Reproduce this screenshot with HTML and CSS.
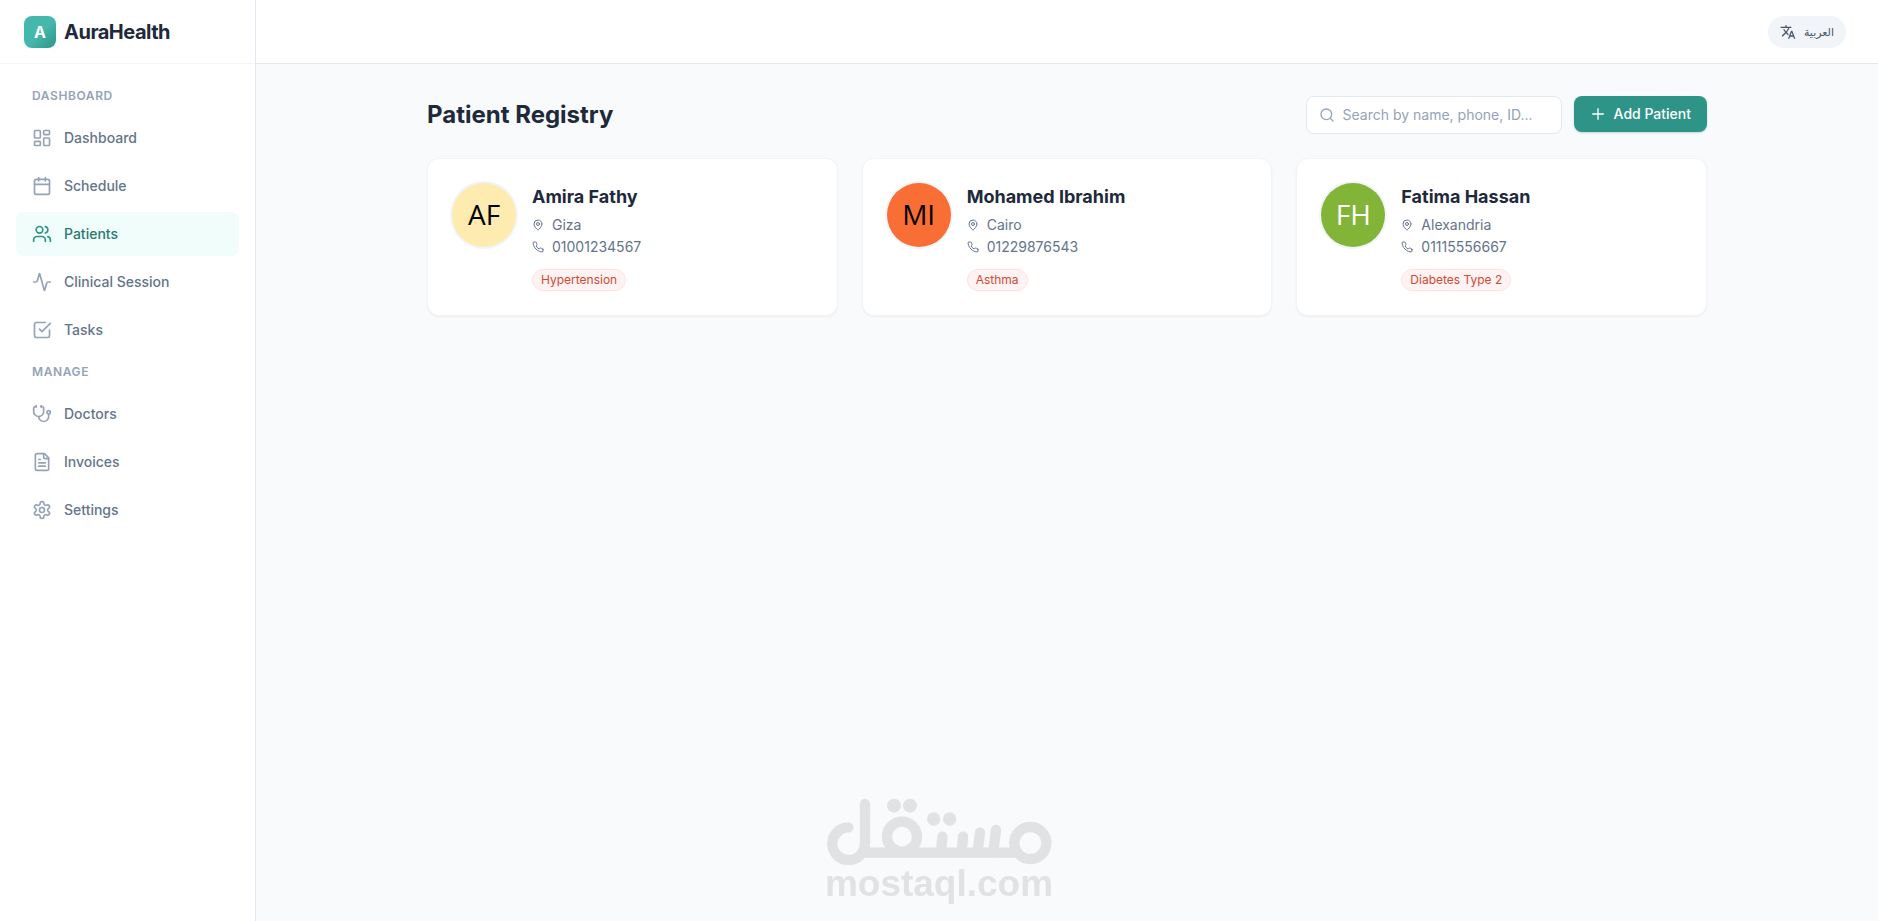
FILE: index.html
```html
<!DOCTYPE html>
<html lang="en">
<head>
  <meta charset="UTF-8" />
  <meta name="viewport" content="width=device-width, initial-scale=1.0" />
  <title>AuraHealth</title>

  <link rel="stylesheet" href="styles.css">
</head>
<body>

  <div class="app">
    <!-- Sidebar -->
    <aside class="sidebar">
      <a class="brand" href="#">
        <span class="brand-mark">A</span>
        <span class="brand-name">AuraHealth</span>
      </a>

      <nav class="nav">
        <h3>Dashboard</h3>
        <ul>
          <li><a href="#">
            <svg class="icon" viewBox="0 0 24 24"><rect x="3" y="3" width="7" height="9" rx="1"/><rect x="14" y="3" width="7" height="5" rx="1"/><rect x="14" y="12" width="7" height="9" rx="1"/><rect x="3" y="16" width="7" height="5" rx="1"/></svg>
            Dashboard
          </a></li>
          <li><a href="#">
            <svg class="icon" viewBox="0 0 24 24"><path d="M8 2v4M16 2v4"/><rect x="3" y="4" width="18" height="18" rx="2"/><path d="M3 10h18"/></svg>
            Schedule
          </a></li>
          <li><a class="active" href="#">
            <svg class="icon" viewBox="0 0 24 24"><path d="M16 21v-2a4 4 0 0 0-4-4H6a4 4 0 0 0-4 4v2"/><circle cx="9" cy="7" r="4"/><path d="M22 21v-2a4 4 0 0 0-3-3.87"/><path d="M16 3.13a4 4 0 0 1 0 7.75"/></svg>
            Patients
          </a></li>
          <li><a href="#">
            <svg class="icon" viewBox="0 0 24 24"><path d="M22 12h-2.48a2 2 0 0 0-1.93 1.46l-2.35 8.36a.25.25 0 0 1-.48 0L9.24 2.18a.25.25 0 0 0-.48 0l-2.35 8.36A2 2 0 0 1 4.49 12H2"/></svg>
            Clinical Session
          </a></li>
          <li><a href="#">
            <svg class="icon" viewBox="0 0 24 24"><path d="m9 11 3 3L22 4"/><path d="M21 12v7a2 2 0 0 1-2 2H5a2 2 0 0 1-2-2V5a2 2 0 0 1 2-2h11"/></svg>
            Tasks
          </a></li>
        </ul>

        <h3>Manage</h3>
        <ul>
          <li><a href="#">
            <svg class="icon" viewBox="0 0 24 24"><path d="M11 2v2M5 2v2"/><path d="M5 3H4a2 2 0 0 0-2 2v4a6 6 0 0 0 12 0V5a2 2 0 0 0-2-2h-1"/><path d="M8 15a6 6 0 0 0 12 0v-3"/><circle cx="20" cy="10" r="2"/></svg>
            Doctors
          </a></li>
          <li><a href="#">
            <svg class="icon" viewBox="0 0 24 24"><path d="M15 2H6a2 2 0 0 0-2 2v16a2 2 0 0 0 2 2h12a2 2 0 0 0 2-2V7Z"/><path d="M14 2v4a2 2 0 0 0 2 2h4"/><path d="M10 9H8M16 13H8M16 17H8"/></svg>
            Invoices
          </a></li>
          <li><a href="#">
            <svg class="icon" viewBox="0 0 24 24"><path d="M12.22 2h-.44a2 2 0 0 0-2 2v.18a2 2 0 0 1-1 1.73l-.43.25a2 2 0 0 1-2 0l-.15-.08a2 2 0 0 0-2.73.73l-.22.38a2 2 0 0 0 .73 2.73l.15.1a2 2 0 0 1 1 1.72v.51a2 2 0 0 1-1 1.74l-.15.09a2 2 0 0 0-.73 2.73l.22.38a2 2 0 0 0 2.73.73l.15-.08a2 2 0 0 1 2 0l.43.25a2 2 0 0 1 1 1.73V20a2 2 0 0 0 2 2h.44a2 2 0 0 0 2-2v-.18a2 2 0 0 1 1-1.73l.43-.25a2 2 0 0 1 2 0l.15.08a2 2 0 0 0 2.73-.73l.22-.39a2 2 0 0 0-.73-2.73l-.15-.08a2 2 0 0 1-1-1.74v-.5a2 2 0 0 1 1-1.74l.15-.09a2 2 0 0 0 .73-2.73l-.22-.38a2 2 0 0 0-2.73-.73l-.15.08a2 2 0 0 1-2 0l-.43-.25a2 2 0 0 1-1-1.73V4a2 2 0 0 0-2-2z"/><circle cx="12" cy="12" r="3"/></svg>
            Settings
          </a></li>
        </ul>
      </nav>
    </aside>

    <div class="page">
      <!-- Top bar -->
      <header class="topbar">
        <button class="lang-button" type="button">
          <svg class="lang-icon" viewBox="0 0 24 24"><path d="M12.87 15.07l-2.54-2.51.03-.03A17.52 17.52 0 0 0 14.07 6H17V4h-7V2H8v2H1v2h11.17C11.5 7.92 10.44 9.75 9 11.35 8.07 10.32 7.3 9.19 6.69 8h-2c.73 1.63 1.73 3.17 2.98 4.56l-5.09 5.02L4 19l5-5 3.11 3.11.76-2.04zM18.5 10h-2L12 22h2l1.12-3h4.75L21 22h2l-4.5-12zm-2.62 7l1.62-4.33L19.12 17h-3.24z"/></svg>
          <span lang="ar">العربية</span>
        </button>
      </header>

      <main class="content">
        <div class="page-header">
          <h1>Patient Registry</h1>
          <div class="actions">
            <label class="search">
              <svg class="icon" viewBox="0 0 24 24"><circle cx="11" cy="11" r="8"/><path d="m21 21-4.300-4.300"/></svg>
              <input type="text" placeholder="Search by name, phone, ID..." aria-label="Search patients" />
            </label>
            <button class="add-button" type="button">
              <svg class="icon" viewBox="0 0 24 24"><path d="M4 12h16M12 4v16"/></svg>
              Add Patient
            </button>
          </div>
        </div>

        <!-- Patient cards -->
        <div class="patient-grid">
          <article class="patient-card">
            <div class="avatar avatar-yellow">AF</div>
            <div class="patient-info">
              <h2>Amira Fathy</h2>
              <p><svg class="icon" viewBox="0 0 24 24"><path d="M20 10c0 5-5.500 10.200-7.400 11.800a1 1 0 0 1-1.200 0C9.500 20.200 4 15 4 10a8 8 0 0 1 16 0"/><circle cx="12" cy="10" r="3"/></svg>Giza</p>
              <p><svg class="icon" viewBox="0 0 24 24"><path d="M22 16.920v3a2 2 0 0 1-2.180 2 19.790 19.790 0 0 1-8.630-3.070 19.500 19.500 0 0 1-6-6 19.790 19.790 0 0 1-3.070-8.670A2 2 0 0 1 4.110 2h3a2 2 0 0 1 2 1.720 12.840 12.840 0 0 0 .7 2.810 2 2 0 0 1-.45 2.110L8.090 9.910a16 16 0 0 0 6 6l1.270-1.270a2 2 0 0 1 2.110-.45 12.840 12.840 0 0 0 2.810.7A2 2 0 0 1 22 16.920z"/></svg>01001234567</p>
              <span class="tag">Hypertension</span>
            </div>
          </article>

          <article class="patient-card">
            <div class="avatar avatar-orange">MI</div>
            <div class="patient-info">
              <h2>Mohamed Ibrahim</h2>
              <p><svg class="icon" viewBox="0 0 24 24"><path d="M20 10c0 5-5.500 10.200-7.400 11.800a1 1 0 0 1-1.200 0C9.500 20.200 4 15 4 10a8 8 0 0 1 16 0"/><circle cx="12" cy="10" r="3"/></svg>Cairo</p>
              <p><svg class="icon" viewBox="0 0 24 24"><path d="M22 16.920v3a2 2 0 0 1-2.180 2 19.790 19.790 0 0 1-8.630-3.070 19.500 19.500 0 0 1-6-6 19.790 19.790 0 0 1-3.070-8.670A2 2 0 0 1 4.110 2h3a2 2 0 0 1 2 1.720 12.840 12.840 0 0 0 .7 2.810 2 2 0 0 1-.45 2.110L8.090 9.910a16 16 0 0 0 6 6l1.270-1.270a2 2 0 0 1 2.110-.45 12.840 12.840 0 0 0 2.810.7A2 2 0 0 1 22 16.920z"/></svg>01229876543</p>
              <span class="tag">Asthma</span>
            </div>
          </article>

          <article class="patient-card">
            <div class="avatar avatar-green">FH</div>
            <div class="patient-info">
              <h2>Fatima Hassan</h2>
              <p><svg class="icon" viewBox="0 0 24 24"><path d="M20 10c0 5-5.500 10.200-7.400 11.800a1 1 0 0 1-1.200 0C9.500 20.200 4 15 4 10a8 8 0 0 1 16 0"/><circle cx="12" cy="10" r="3"/></svg>Alexandria</p>
              <p><svg class="icon" viewBox="0 0 24 24"><path d="M22 16.920v3a2 2 0 0 1-2.180 2 19.790 19.790 0 0 1-8.630-3.070 19.500 19.500 0 0 1-6-6 19.790 19.790 0 0 1-3.070-8.670A2 2 0 0 1 4.110 2h3a2 2 0 0 1 2 1.720 12.840 12.840 0 0 0 .7 2.810 2 2 0 0 1-.45 2.110L8.090 9.910a16 16 0 0 0 6 6l1.270-1.270a2 2 0 0 1 2.110-.45 12.840 12.840 0 0 0 2.810.7A2 2 0 0 1 22 16.920z"/></svg>01115556667</p>
              <span class="tag">Diabetes Type 2</span>
            </div>
          </article>
        </div>
      </main>
    </div>
  </div>

  <!-- Watermark -->
  <div class="watermark">
    <svg class="watermark-logo" viewBox="0 0 675 201">
      <g class="strokes">
        <path d="M64 88A49 49 0 1 0 114 136V18"/>
        <path d="M106 164H568"/>
        <circle cx="225" cy="116" r="45"/>
        <circle cx="610" cy="135" r="48"/>
        <path d="M342 160L346 116M404 160L408 116M452 160L459 104M499 160L507 96"/>
      </g>
      <circle cx="201" cy="23" r="21"/>
      <circle cx="249" cy="23" r="21"/>
      <circle cx="320" cy="63" r="20"/>
      <circle cx="368" cy="63" r="20"/>
    </svg>
    <span>mostaql.com</span>
  </div>

</body>
</html>
```

FILE: styles.css
```css
* {
  box-sizing: border-box;
}

body {
  font-family: Inter, "Noto Sans", sans-serif;
  font-size: 14px;
  line-height: 20px;
  color: #1e293b;
  background-color: #f8fafc;
  margin: 0;
}

h1, h2, h3, p, ul {
  margin: 0;
  padding: 0;
}

ul {
  list-style: none;
}

a {
  color: inherit;
  text-decoration: none;
}

button, input {
  font: inherit;
}

.icon {
  width: 20px;
  height: 20px;
  flex-shrink: 0;
  fill: none;
  stroke: currentColor;
  stroke-width: 2;
  stroke-linecap: round;
  stroke-linejoin: round;
}

.app {
  display: flex;
  min-height: 100vh;
}

/* Sidebar */
.sidebar {
  width: 256px;
  flex-shrink: 0;
  background-color: #fff;
  border-right: 1px solid #e2e8f0;
}

.brand {
  display: flex;
  align-items: center;
  gap: 8px;
  height: 64px;
  padding: 0 24px;
  border-bottom: 1px solid #f1f5f9;
}

.brand-mark {
  display: flex;
  align-items: center;
  justify-content: center;
  width: 32px;
  height: 32px;
  border-radius: 8px;
  background: linear-gradient(135deg, #45b8ac 50%, #2f9488);
  color: #fff;
  font-size: 16px;
  font-weight: 700;
}

.brand-name {
  font-size: 20px;
  line-height: 28px;
  font-weight: 700;
  letter-spacing: -0.025em;
}

.nav {
  padding: 24px 16px;
}

.nav h3 {
  padding: 0 16px;
  margin-bottom: 12px;
  font-size: 12px;
  line-height: 16px;
  font-weight: 600;
  letter-spacing: 0.05em;
  text-transform: uppercase;
  color: #94a3b8;
}

.nav ul {
  display: flex;
  flex-direction: column;
  gap: 4px;
  margin-bottom: 12px;
}

.nav a {
  display: flex;
  align-items: center;
  gap: 12px;
  padding: 12px 16px;
  border-radius: 8px;
  font-weight: 500;
  color: #64748b;
}

.nav a .icon {
  color: #94a3b8;
}

.nav a.active {
  background-color: #f0fdfa;
  color: #2a7a70;
}

.nav a.active .icon {
  color: #2f9488;
}

/* Top bar */
.page {
  flex: 1;
  min-width: 0;
}

.topbar {
  display: flex;
  align-items: center;
  justify-content: flex-end;
  height: 64px;
  padding: 0 32px;
  background-color: #fff;
  border-bottom: 1px solid #e2e8f0;
}

.lang-button {
  display: flex;
  align-items: center;
  gap: 8px;
  height: 32px;
  padding: 0 12px;
  border: none;
  border-radius: 16px;
  background-color: #f1f5f9;
  color: #475569;
  font-family: Inter, "DejaVu Sans", sans-serif;
  font-size: 11px;
  line-height: 16px;
  cursor: pointer;
}

.lang-icon {
  width: 16px;
  height: 16px;
  fill: currentColor;
}

/* Content */
.content {
  max-width: 1344px;
  margin: 0 auto;
  padding: 32px;
}

.page-header {
  display: flex;
  align-items: center;
  justify-content: space-between;
  margin-bottom: 24px;
}

.page-header h1 {
  font-size: 24px;
  line-height: 32px;
  font-weight: 700;
}

.actions {
  display: flex;
  align-items: flex-start;
  gap: 12px;
}

.search {
  display: flex;
  align-items: center;
  gap: 8px;
  width: 256px;
  height: 38px;
  padding: 0 12px;
  background-color: #fff;
  border: 1px solid #e2e8f0;
  border-radius: 8px;
  color: #94a3b8;
}

.search .icon,
.add-button .icon {
  width: 16px;
  height: 16px;
}

.search input {
  flex: 1;
  min-width: 0;
  padding: 0;
  border: none;
  outline: none;
  background: none;
  color: #1e293b;
}

.search input::placeholder {
  color: #94a3b8;
}

.add-button {
  display: flex;
  align-items: center;
  gap: 8px;
  height: 36px;
  padding: 0 16px;
  border: none;
  border-radius: 8px;
  background-color: #2f9488;
  box-shadow: 0 1px 2px rgba(47, 148, 136, 0.3);
  color: #fff;
  font-weight: 500;
  cursor: pointer;
}

.add-button:hover {
  background-color: #277a70;
}

.patient-grid {
  display: grid;
  grid-template-columns: repeat(3, 1fr);
  gap: 24px;
}

.patient-card {
  display: flex;
  align-items: flex-start;
  gap: 16px;
  padding: 24px;
  background-color: #fff;
  border: 1px solid #f1f5f9;
  border-radius: 12px;
  box-shadow: 0 1px 2px rgba(0, 0, 0, 0.05);
}

.avatar {
  display: flex;
  align-items: center;
  justify-content: center;
  width: 64px;
  height: 64px;
  padding-bottom: 2px;
  flex-shrink: 0;
  border-radius: 50%;
  box-shadow: 0 0 0 2px #f1f5f9;
  font-family: "Open Sans", sans-serif;
  font-size: 28px;
  color: #000;
}

.avatar-yellow {
  background-color: #fdebb0;
}

.avatar-orange {
  background-color: #f96e35;
}

.avatar-green {
  background-color: #82b438;
  color: #fff;
}

.patient-info h2 {
  margin-bottom: 4px;
  font-size: 18px;
  line-height: 28px;
  font-weight: 700;
}

.patient-info p {
  display: flex;
  align-items: center;
  gap: 8px;
  margin-bottom: 2px;
  color: #64748b;
}

.patient-info .icon {
  width: 12px;
  height: 12px;
}

.tag {
  display: inline-block;
  margin-top: 10px;
  padding: 2px 8px;
  border: 1px solid #fee2e2;
  border-radius: 11px;
  background-color: #fef2f2;
  color: #d04a35;
  font-size: 12px;
  line-height: 16px;
  vertical-align: top;
}

/* Watermark over the page */
.watermark {
  position: fixed;
  left: 0;
  right: 0;
  bottom: 18px;
  display: flex;
  flex-direction: column;
  align-items: center;
  color: #e1e2e4;
  font-family: "Liberation Sans", Arial, sans-serif;
  font-size: 37px;
  line-height: 38px;
  font-weight: 700;
  pointer-events: none;
}

.watermark-logo {
  width: 225px;
  height: 67px;
  fill: #e1e2e4;
}

.watermark-logo .strokes {
  fill: none;
  stroke: #e1e2e4;
  stroke-width: 31;
  stroke-linecap: round;
}
```
